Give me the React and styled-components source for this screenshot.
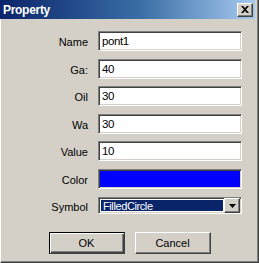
import React from "react";
import styled, { createGlobalStyle } from "styled-components";

const GlobalStyle = createGlobalStyle`
  html, body {
    margin: 0;
    padding: 0;
    background: #d4d0c8;
  }
  body {
    font-family: "Liberation Sans", Arial, sans-serif;
  }
`;

const Window = styled.div`
  width: 259px;
  height: 263px;
  box-sizing: border-box;
  background: #d4d0c8;
  border-left: 1px solid #ffffff;
  border-right: 1px solid #404040;
  border-bottom: 1px solid #404040;
  box-shadow: inset -1px -1px 0 #808080;
  padding: 0 3px 0 0;
  display: flex;
  flex-direction: column;
`;

const TitleBar = styled.div`
  height: 19px;
  margin-left: -1px;
  display: flex;
  align-items: center;
  justify-content: space-between;
  padding: 0 2px 0 3px;
  background: linear-gradient(to right, #0a246a 0%, #3a6ea5 55%, #a6caf0 100%);
`;

const Title = styled.span`
  color: #ffffff;
  font-family: "Liberation Sans", Arial, sans-serif;
  font-weight: bold;
  font-size: 12px;
  letter-spacing: -0.3px;
`;

const CloseButton = styled.div`
  width: 16px;
  height: 14px;
  box-sizing: border-box;
  background: #d4d0c8;
  border-top: 1px solid #ffffff;
  border-left: 1px solid #ffffff;
  border-right: 1px solid #404040;
  border-bottom: 1px solid #404040;
  box-shadow: inset -1px -1px 0 #808080;
  display: flex;
  align-items: center;
  justify-content: center;
`;

const Form = styled.div`
  display: grid;
  grid-template-columns: 87px 144px;
  column-gap: 10px;
  row-gap: 7.5px;
  grid-auto-rows: 20px;
  margin-top: 12px;
`;

const Label = styled.div`
  font-size: 11px;
  color: #000;
  text-align: right;
  align-self: center;
  padding-top: 2px;
`;

const Field = styled.div`
  box-sizing: border-box;
  height: ${(p) => p.$h || 20}px;
  background: ${(p) => p.$bg || "#ffffff"};
  border-top: 1px solid #808080;
  border-left: 1px solid #808080;
  border-right: 1px solid #ffffff;
  border-bottom: 1px solid #ffffff;
  box-shadow: inset 1px 1px 0 #404040, inset -1px -1px 0 #d4d0c8;
  font-size: 11.5px;
  letter-spacing: -0.4px;
  color: #000;
  padding: 2px 0 0 3px;
  line-height: 14px;
`;

const Combo = styled(Field)`
  display: flex;
  align-items: center;
  padding: 2px;
  height: 17px;
  margin-top: 1px;
`;

const Selected = styled.div`
  flex: 1;
  height: 100%;
  background: #0a246a;
  color: #ffffff;
  font-size: 11px;
  letter-spacing: -0.4px;
  display: flex;
  align-items: center;
  padding-left: 2px;
  margin-right: 1px;
`;

const DropButton = styled(CloseButton)`
  width: 16px;
  height: 15px;
  margin-right: -1px;
`;

const Buttons = styled.div`
  display: flex;
  justify-content: center;
  gap: 10px;
  margin-top: 16px;
  padding-left: 3px;
`;

const Button = styled.div`
  width: 76px;
  height: 22px;
  box-sizing: border-box;
  background: #d4d0c8;
  font-size: 11px;
  display: flex;
  align-items: center;
  justify-content: center;
  border-top: 1px solid ${(p) => (p.$default ? "#000" : "#ffffff")};
  border-left: 1px solid ${(p) => (p.$default ? "#000" : "#ffffff")};
  border-right: 1px solid #404040;
  border-bottom: 1px solid #404040;
  box-shadow: ${(p) =>
    p.$default
      ? "inset 1px 1px 0 #ffffff, inset -1px -1px 0 #404040, inset -2px -2px 0 #808080"
      : "inset -1px -1px 0 #808080"};
`;

const rows = [
  ["Name", "pont1"],
  ["Ga:", "40"],
  ["Oil", "30"],
  ["Wa", "30"],
  ["Value", "10"],
];

export default function App() {
  return (
    <>
      <GlobalStyle />
      <Window>
        <TitleBar>
          <Title>Property</Title>
          <CloseButton>
            <svg width="8" height="7" viewBox="0 0 8 7">
              <path d="M0 0h2l2 2 2-2h2L5 3.5 8 7H6L4 5 2 7H0l3-3.5z" fill="#000" />
            </svg>
          </CloseButton>
        </TitleBar>
        <Form>
          {rows.map(([label, value]) => (
            <React.Fragment key={label}>
              <Label>{label}</Label>
              <Field>{value}</Field>
            </React.Fragment>
          ))}
          <Label>Color</Label>
          <Field $bg="#0000ff" />
          <Label>Symbol</Label>
          <Combo>
            <Selected>FilledCircle</Selected>
            <DropButton>
              <svg width="7" height="4" viewBox="0 0 7 4">
                <path d="M0 0h7L3.5 4z" fill="#000" />
              </svg>
            </DropButton>
          </Combo>
        </Form>
        <Buttons>
          <Button $default>OK</Button>
          <Button>Cancel</Button>
        </Buttons>
      </Window>
    </>
  );
}
